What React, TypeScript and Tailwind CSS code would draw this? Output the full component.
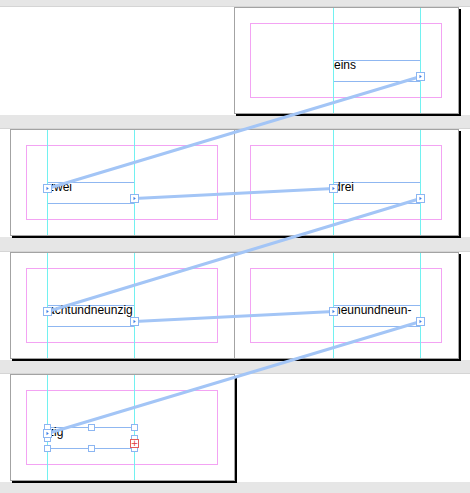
import React from 'react'

// page geometry (px) – the thread lines are derived from these
const PAGE_TOPS = [7, 129, 252, 374]
const FRAME_TOP = 52
const GUIDES = { left: [36, 123], right: [98, 185] }
const CONTENT_X = { left: 11, right: 235 }

type Side = 'left' | 'right'

interface FrameDef {
  text: string
  side: Side
  row: number
  first?: boolean
  selected?: boolean
}

const FRAMES: FrameDef[] = [
  { text: 'eins', side: 'right', row: 0, first: true },
  { text: 'zwei', side: 'left', row: 1 },
  { text: 'drei', side: 'right', row: 1 },
  { text: 'achtundneunzig', side: 'left', row: 2 },
  { text: 'neunundneun-', side: 'right', row: 2 },
  { text: 'zig', side: 'left', row: 3, selected: true },
]

function frameOrigin(f: FrameDef) {
  return {
    x: CONTENT_X[f.side] + GUIDES[f.side][0],
    y: PAGE_TOPS[f.row] + 1 + FRAME_TOP,
  }
}

function Port() {
  return (
    <svg width="9" height="9" viewBox="0 0 9 9" className="block">
      <rect x="0.5" y="0.5" width="8" height="8" fill="#fff" stroke="#8cb6f2" />
      <polygon points="3.5,2.8 5.8,4.5 3.5,6.2" fill="#3d7fe6" />
    </svg>
  )
}

function Handle() {
  return <div className="w-[7px] h-[7px] bg-white border border-[#8cb6f2]" />
}

function Handles() {
  return (
    <div className="absolute z-20 left-[-4px] top-[-4px] w-[94px] h-[28px] flex flex-col justify-between">
      <div className="flex justify-between">
        <Handle />
        <Handle />
        <Handle />
      </div>
      <div className="flex justify-between">
        <Handle />
        <Handle />
      </div>
      <div className="flex justify-between">
        <Handle />
        <Handle />
        <Handle />
      </div>
    </div>
  )
}

function TextFrame({ frame }: { frame: FrameDef }) {
  const last = frame.selected
  return (
    <div className="relative w-[88px] h-[22px] border border-[#8fb7f1]">
      <p className="whitespace-nowrap text-[12px] leading-[9px] text-black font-['Liberation_Sans',Arial,sans-serif]">
        {frame.text}
      </p>

      {last && <Handles />}

      {!frame.first && (
        <div className="absolute z-20 left-[-5px] top-[1px]">
          <Port />
        </div>
      )}

      {last ? (
        <div className="absolute z-20 left-[82px] top-[11px] w-[9px] h-[9px] bg-white border border-[#e25c5c] flex items-center justify-center text-[#e03a3a] text-[9px] leading-none font-['DejaVu_Sans',sans-serif]">
          +
        </div>
      ) : (
        <div className="absolute z-20 left-[82px] top-[11px]">
          <Port />
        </div>
      )}
    </div>
  )
}

function Page({ side, frame }: { side: Side; frame?: FrameDef }) {
  return (
    <div className="relative w-[223px] h-[105px] bg-white p-[15px]">
      <div
        className={`w-[192px] h-[75px] border border-[#f3a3f3] pt-[36px] ${
          side === 'left' ? 'pl-[20px]' : 'pl-[82px]'
        }`}
      >
        {frame && <TextFrame frame={frame} />}
      </div>
      {GUIDES[side].map((x) => (
        <div key={x} className="absolute top-0 bottom-0 w-px bg-[#72f1f1]" style={{ left: x }} />
      ))}
    </div>
  )
}

function Row({ row, gap }: { row: number; gap: string }) {
  const left = FRAMES.find((f) => f.row === row && f.side === 'left')
  const right = FRAMES.find((f) => f.row === row && f.side === 'right')
  return (
    <div className={`h-[109px] bg-white border-t border-[#d5d5d5] pl-[10px] ${gap}`}>
      <div
        className={`flex w-fit border border-[#a3a3a3] shadow-[2px_2px_0_#000] ${left ? '' : 'ml-[224px]'}`}
      >
        {left && <Page side="left" frame={left} />}
        {left && right && <div className="w-px bg-[#a3a3a3]" />}
        {right && <Page side="right" frame={right} />}
      </div>
    </div>
  )
}

export default function App() {
  // thread lines: out port of each frame -> in port of the next
  const links = FRAMES.slice(0, -1).map((f, i) => {
    const a = frameOrigin(f)
    const b = frameOrigin(FRAMES[i + 1])
    return { x1: a.x + 87.5, y1: a.y + 16.5, x2: b.x + 0.5, y2: b.y + 6.5 }
  })

  return (
    <div className="relative w-[470px] h-[493px] overflow-hidden bg-[#e6e6e6] flex flex-col">
      <Row row={0} gap="mt-[6px]" />
      <Row row={1} gap="mt-[13px]" />
      <Row row={2} gap="mt-[14px]" />
      <Row row={3} gap="mt-[13px]" />

      <svg className="absolute inset-0 z-10 pointer-events-none" width="470" height="493">
        {links.map((l, i) => (
          <line key={i} {...l} stroke="#a3c5f6" strokeWidth="3" strokeLinecap="round" />
        ))}
      </svg>
    </div>
  )
}
